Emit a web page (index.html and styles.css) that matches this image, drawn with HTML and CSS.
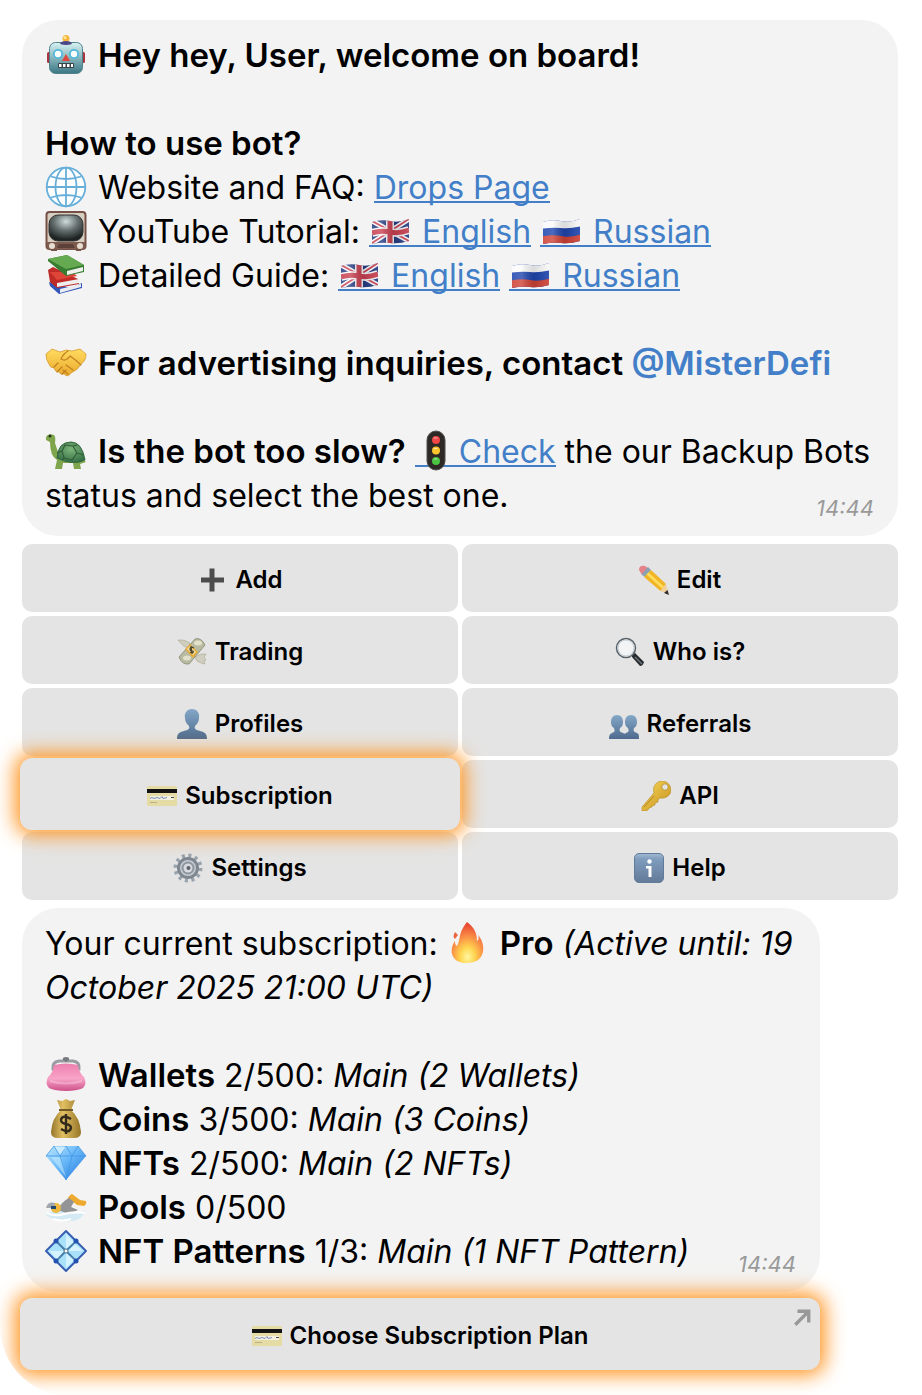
FILE: index.html
```html
<!DOCTYPE html>
<html lang="en">
<head>
<meta charset="utf-8">
<meta name="viewport" content="width=device-width, initial-scale=1">
<title>Bot chat</title>
<link rel="stylesheet" href="styles.css">
</head>
<body>
<svg class="sprite" aria-hidden="true">
  <defs>
    <linearGradient id="g-robot" x1="0" y1="0" x2="0" y2="1"><stop offset="0" stop-color="#d9f3f3"/><stop offset=".5" stop-color="#86b5bb"/><stop offset="1" stop-color="#3b7683"/></linearGradient>
    <radialGradient id="g-tv" cx=".5" cy=".25" r=".7"><stop offset="0" stop-color="#cfdcdb"/><stop offset=".5" stop-color="#65706f"/><stop offset="1" stop-color="#1d2222"/></radialGradient>
    <linearGradient id="g-person" x1="0" y1="0" x2="0" y2="1"><stop offset="0" stop-color="#84a8c8"/><stop offset="1" stop-color="#4e6a8e"/></linearGradient>
    <linearGradient id="g-info" x1="0" y1="0" x2="0" y2="1"><stop offset="0" stop-color="#a3b9d2"/><stop offset=".2" stop-color="#7e9cbd"/><stop offset="1" stop-color="#637a98"/></linearGradient>
    <linearGradient id="g-purse" x1="0" y1="0" x2="0" y2="1"><stop offset="0" stop-color="#ee7fae"/><stop offset=".55" stop-color="#f7a5c7"/><stop offset="1" stop-color="#cf4f8a"/></linearGradient>
    <radialGradient id="g-flame" cx=".5" cy=".85" r=".8"><stop offset="0" stop-color="#fff7a0"/><stop offset=".3" stop-color="#ffd44f"/><stop offset=".65" stop-color="#f98a45"/><stop offset="1" stop-color="#ea4632"/></radialGradient>
    <linearGradient id="g-bag" x1="0" y1="0" x2="1" y2="0"><stop offset="0" stop-color="#93742c"/><stop offset=".4" stop-color="#e2c062"/><stop offset="1" stop-color="#967529"/></linearGradient>
    <linearGradient id="g-gem" x1="0" y1="0" x2="1" y2="1"><stop offset="0" stop-color="#bde8ff"/><stop offset=".5" stop-color="#62b4f7"/><stop offset="1" stop-color="#2171da"/></linearGradient>
    <linearGradient id="g-gold" x1="0" y1="0" x2="1" y2="1"><stop offset="0" stop-color="#f8dc58"/><stop offset="1" stop-color="#c48a1d"/></linearGradient>
    <linearGradient id="g-hand" x1="0" y1="0" x2="0" y2="1"><stop offset="0" stop-color="#ffdb5f"/><stop offset="1" stop-color="#eaaa2d"/></linearGradient>
    <radialGradient id="g-shell" cx=".5" cy=".35" r=".7"><stop offset="0" stop-color="#7eb57b"/><stop offset="1" stop-color="#2f6a41"/></radialGradient>
    <linearGradient id="g-fold" x1="0" y1="0" x2="1" y2="0"><stop offset="0" stop-color="#fff" stop-opacity=".1"/><stop offset=".3" stop-color="#fff" stop-opacity=".2"/><stop offset=".6" stop-color="#000" stop-opacity=".12"/><stop offset="1" stop-color="#fff" stop-opacity=".1"/></linearGradient>
    <clipPath id="wave"><path d="M3 12q9-3 18-1t19-2v22q-10 3-19 2t-18 1z"/></clipPath>
  </defs>

  <symbol id="robot" viewBox="0 0 42 42">
    <rect x="2" y="18" width="4" height="11" rx="1.500" fill="#a8343f"/><rect x="36" y="18" width="4" height="11" rx="1.500" fill="#a8343f"/>
    <circle cx="21" cy="4.500" r="3.500" fill="#f6b73c"/><circle cx="20" cy="3.500" r="1.500" fill="#ffe49a"/>
    <rect x="4.500" y="8.500" width="33" height="31" rx="6" fill="url(#g-robot)" stroke="#4e838c"/>
    <path d="M15 10q1-3 6-3t6 3q-6 2-12 0z" fill="#4b4687"/>
    <circle cx="13" cy="20" r="5" fill="#50b9dc"/><circle cx="29" cy="20" r="5" fill="#50b9dc"/><circle cx="13" cy="20" r="3.200" fill="#fff"/><circle cx="29" cy="20" r="3.200" fill="#fff"/>
    <path d="M21 20l4 7h-8z" fill="#e0473f"/><rect x="13" y="29" width="16" height="5" rx="1" fill="#38444a"/><path d="M14 30h2.500v3H14zm4 0h2.500v3H18zm4 0h2.500v3H22zm4 0h2v3h-2z" fill="#fff"/>
  </symbol>
  <symbol id="globe" viewBox="0 0 42 42">
    <circle cx="21" cy="21" r="19.500" fill="#fff"/>
    <g fill="none" stroke="#67afd9" stroke-width="1.800"><circle cx="21" cy="21" r="19.300"/><ellipse cx="21" cy="21" rx="10.500" ry="19.300"/><path d="M21 2v38M2 21h38M6 10.500q15 5 30 0M6 31.500q15-5 30 0"/></g>
  </symbol>
  <symbol id="tv" viewBox="0 0 42 42">
    <path d="M5 37h7v4H6zm25 0h7l-1 4h-5z" fill="#77564b"/>
    <rect x="1.500" y="2" width="39" height="37" rx="3" fill="#d6cec1" stroke="#765046" stroke-width="2"/>
    <rect x="4" y="5" width="34" height="26" rx="9" fill="url(#g-tv)" stroke="#343232"/>
    <path d="M2 32h38v7H2z" fill="#7e5b4f"/><path d="M14 34h14l2 4H12z" fill="#5c4139"/><circle cx="7" cy="36" r="3" fill="#e6ded1"/><circle cx="35" cy="36" r="3" fill="#e6ded1"/>
  </symbol>
  <symbol id="books" viewBox="0 0 42 42">
    <path d="M4 28l22 6 11-5v5l-23 6-9-8z" fill="#3156b8"/><path d="M15 35l21-5v3l-21 6z" fill="#e9edf2"/>
    <path d="M3 16l5-3 25 12 1 5-22 4-7-6z" fill="#bf2b27"/><path d="M12 29l22-4v4l-22 4z" fill="#eee"/><path d="M5 18l7 8 20-4-5-4z" fill="#de4438"/>
    <path d="M3 5l19-4 17 10v7l-18 4L3 7z" fill="#387c32"/><path d="M3 5l19-4 17 10-18 4z" fill="#65a950"/><path d="M22 17l16-4v4l-16 4z" fill="#eef1ec"/>
  </symbol>
  <symbol id="uk" viewBox="0 0 42 42">
    <g clip-path="url(#wave)"><path fill="#263c83" d="M0 5h42v32H0z"/><path d="M3 11l37 20M3 33L40 9" stroke="#f4f4f7" stroke-width="5"/><path d="M3 11l37 20M3 33L40 9" stroke="#c94050" stroke-width="1.800"/><path d="M21 5v32M3 23q9-3 18-1t19-2" fill="none" stroke="#f4f4f7" stroke-width="8"/><path d="M21 5v32M3 23q9-3 18-1t19-2" fill="none" stroke="#c93f50" stroke-width="5"/><path d="M0 5h42v32H0z" fill="url(#g-fold)"/></g>
  </symbol>
  <symbol id="ru" viewBox="0 0 42 42">
    <g clip-path="url(#wave)"><path fill="#1f45ae" d="M0 5h42v32H0z"/><path d="M0 0h42v16q-12 3-21 2T0 19z" fill="#fafafa"/><path d="M0 27q12-3 21-1t21-2v15H0z" fill="#cf4135"/><path d="M0 5h42v32H0z" fill="url(#g-fold)"/></g>
  </symbol>
  <symbol id="shake" viewBox="0 0 42 42">
    <path d="M1 12l6-5 8 3 6-2 6 1 8-2 6 5q0 7-5 10-3 6-10 9-3 5-7 1-4 1-5-2-4 0-5-4-4 0-5-4-3-4-3-10z" fill="url(#g-hand)" stroke="#d69930" stroke-width=".8"/>
    <path d="M23 9q-5 3-7 8 5 3 9-3 6 4 11 9M9 25l4-4m-1 9l5-5m0 7l4-4m0-5l7 5m-10 0l5 4" fill="none" stroke="#c17e20" stroke-width="1.200" stroke-linecap="round"/>
  </symbol>
  <symbol id="turtle" viewBox="0 0 42 42">
    <path d="M1 7q2-4 8-2 2 2 1 8l4 12 22 3 5 4-6 2 1 5h-7l-1-6H18l-1 6h-7l2-9Q5 26 5 12L1 10z" fill="#7ea54c"/>
    <path d="M12 28q1-16 14-16 11 0 14 18-12 6-28-2z" fill="url(#g-shell)" stroke="#356840"/>
    <path d="M20 15l8 1 4 7-5 7-8-2-2-7zm8 1l4-1m0 8l7 2m-22-4l-5 2m7 5l-2 2" fill="none" stroke="#315e37" stroke-width="1.200"/><circle cx="5" cy="6" r="1.500" fill="#24331a"/>
  </symbol>
  <symbol id="lights" viewBox="0 0 42 42">
    <rect x="12" y="1" width="18" height="39" rx="9" fill="#2c2927" stroke="#524f4c"/><circle cx="21" cy="10" r="4" fill="#ee4746"/><circle cx="21" cy="20.500" r="4" fill="#fbc42e"/><circle cx="21" cy="31" r="4" fill="#4bc442"/><path d="M19 8h3M19 18.500h3M19 29h3" stroke="#fff" opacity=".6" stroke-linecap="round"/>
  </symbol>
  <symbol id="plus" viewBox="0 0 30 30"><path d="M12.500 3.500h5v9H27v5h-9.500v9h-5v-9H4v-5h8.500z" fill="#4c4c4d"/></symbol>
  <symbol id="pencil" viewBox="0 0 30 30">
    <path d="M0 5q0-5 6-4l3 2-6 7z" fill="#e5838a"/><path d="M2.500 9.500L9 2l3 3-6 7z" fill="#8aa0b3"/><path d="M5 12l7-7 15 14-5.500 7z" fill="#f0b425"/><path d="M8.500 8.500L24 22.500" stroke="#ffdc5c" stroke-width="3"/><path d="M27 19l2.500 10-8-3z" fill="#f1cf9c"/><path d="M28.500 25l1.500 5-5-2z" fill="#302b2a"/>
  </symbol>
  <symbol id="money" viewBox="0 0 30 30">
    <path d="M11 11Q6 10 1 3q6-1 12 3zm7 9q6-4 11-3l-2 3 2 3-2 1 1 3-4-1q-5-1-6-6z" fill="#d0cfbf" stroke="#a9a894" stroke-width=".6"/>
    <path d="M2 20L18 2q6-2 10 6L12 27q-7 1-10-7z" fill="#b9baa2" stroke="#85876f" stroke-width=".8"/><ellipse cx="21" cy="6" rx="4" ry="2.500" fill="#e1e0cb"/><ellipse cx="10" cy="21" rx="4" ry="2.500" fill="#e1e0cb"/>
    <path d="M8 12l5-5 8 8-5 6z" fill="#e7ad38"/><path d="M10 12l3-3 6 6-3 3z" fill="#eee0a8"/><path d="M17 11q-4-2-4 1 0 2 3 2 1 3-3 1m1-6l1 8" fill="none" stroke="#4c442b" stroke-width="1.200"/>
  </symbol>
  <symbol id="search" viewBox="0 0 30 30">
    <path d="M17 18l3-2 9 9q-1 4-4 4l-8-9z" fill="#262a2d"/><path d="M20 20l7 7" stroke="#737b82" stroke-width="1.200"/><circle cx="11" cy="11" r="9.500" fill="#f3f4f5" stroke="#596269" stroke-width="1.500"/><circle cx="11" cy="11" r="8" fill="none" stroke="#c5ccd1"/>
  </symbol>
  <symbol id="person" viewBox="0 0 30 30"><path d="M15 0c5 0 8 4 7 9 0 4-2 6-4 8-1 3 1 4 5 5 5 1 7 3 7 8H0c0-5 2-7 7-8 4-1 6-2 5-5-2-2-4-4-4-8-1-5 2-9 7-9z" fill="url(#g-person)"/></symbol>
  <symbol id="people" viewBox="0 0 30 30">
    <path d="M8 6c4 0 6 3 6 7 0 3-1 5-3 6-1 3 0 4 3 5 3 1 4 2 4 6H0c0-4 1-5 3-6 3-1 3-2 2-5-2-1-3-3-3-6 0-4 2-7 6-7z" fill="url(#g-person)"/><path d="M22 6c4 0 6 3 6 7 0 3-1 5-3 6-1 3 0 4 3 5 2 1 2 2 2 6H15c0-4 0-5 2-6 3-1 3-2 2-5-2-1-3-3-3-6 0-4 2-7 6-7z" fill="url(#g-person)"/>
  </symbol>
  <symbol id="card" viewBox="0 0 30 30">
    <rect y="5" width="30" height="20" rx="1.500" fill="#e4dba5"/><path d="M0 8h30v4H0z" fill="#131313"/><path d="M3 15h24v4H3z" fill="#f3f1df"/><path d="M3 17.500l2-1 2 1 3-1 3 1 2-2 1 2 4-1" fill="none" stroke="#7d90bd"/><path d="M24 16.500h3" stroke="#444"/><path d="M3 21.500h7" stroke="#bbb185"/>
  </symbol>
  <symbol id="key" viewBox="0 0 30 30"><path d="M13 12C11 5 16 0 21 0c5 0 9 4 9 9 0 5-5 9-11 8l-2 2v2l-3 1v2l-3 1v1l-3 1-1 2-2 1H1v-4z" fill="url(#g-gold)" stroke="#b8891f" stroke-width=".6"/><circle cx="24" cy="6" r="3.200" fill="#e4e4e4" stroke="#b78a22" stroke-width=".8"/><path d="M13 15L3 26" stroke="#b58425"/></symbol>
  <symbol id="gear" viewBox="0 0 30 30">
    <circle cx="15" cy="15" r="12.500" fill="none" stroke="#98a2ad" stroke-width="4" stroke-dasharray="3 3.545"/><circle cx="15" cy="15" r="9.500" fill="#c7ccd1" stroke="#7e8791" stroke-width="3"/><circle cx="15" cy="15" r="6.500" fill="#8e959e"/><circle cx="15" cy="15" r="4.500" fill="#d7dade"/><circle cx="15.500" cy="15" r="2" fill="#5c6269"/>
  </symbol>
  <symbol id="info" viewBox="0 0 30 30"><rect x=".5" y=".5" width="29" height="29" rx="4.500" fill="url(#g-info)" stroke="#617b9b"/><circle cx="15.500" cy="8.500" r="2.200" fill="#fff"/><path d="M12 13h5.500v11h-3v-8.500H12z" fill="#fff"/></symbol>
  <symbol id="flame" viewBox="0 0 42 42"><path d="M20 0c8 6 10 12 10 19 2-1 2-4 1-6 7 7 10 27-10 28C5 42 1 29 8 19c0 2 0 4 2 5 4-7 1-13 10-24z" fill="url(#g-flame)"/><path d="M8 10l3 3-3 4q-3-2 0-7z" fill="#ef6640"/></symbol>
  <symbol id="purse" viewBox="0 0 42 42">
    <path d="M8 15q-1-7 6-8h14q7 1 6 8z" fill="none" stroke="#999da1" stroke-width="3"/><path d="M18 6q-1-3 3-3t3 3l-3 2z" fill="#777b80"/>
    <path d="M9 11q12-3 24 0 1 8 6 12 5 11-7 13-11 2-22 0Q-2 34 3 23q5-4 6-12z" fill="url(#g-purse)"/><path d="M5 27q16 5 32 0" fill="none" stroke="#ffd4e5" stroke-width="2" opacity=".4"/>
  </symbol>
  <symbol id="bag" viewBox="0 0 42 42">
    <path d="M12 2l5 1 4-2 4 2 5-1-4 10q9 8 10 22 0 6-7 6H13q-7 0-7-6 1-14 10-22z" fill="url(#g-bag)"/><path d="M14 12h14" stroke="#735b28" stroke-width="2"/><path d="M26 21q-9-5-10 1 0 3 5 4 5 1 5 4-2 6-10 1M21 16v20" fill="none" stroke="#332b1b" stroke-width="2.400"/>
  </symbol>
  <symbol id="gem" viewBox="0 0 42 42"><path d="M9 4h24l8 10-20 24L1 14z" fill="url(#g-gem)"/><path d="M1 14h40L33 4 27 14 21 4l-6 10L9 4zm14 0l6 24 6-24" fill="none" stroke="#4397e4" stroke-width=".8"/><path d="M10 5l5 8 6-8z" fill="#dff5ff" opacity=".7"/><path d="M15 15l6 20-15-20z" fill="#c6edff" opacity=".55"/></symbol>
  <symbol id="swim" viewBox="0 0 42 42">
    <path d="M1 29q10-8 20-3t20-2q-5 11-14 11-14 2-26-6z" fill="#d4eaf5"/><path d="M22 14q2-5 5-6l8 6 6 1q1 3-2 5l-7-1-5-4-4 4z" fill="#edaa2e"/><path d="M13 24q3-8 11-12l5 4-3 5 7 3-9 4z" fill="#929496"/><circle cx="11" cy="22" r="5" fill="#efb83f"/><path d="M1 22q2-7 9-5l-1 5z" fill="#a2a7ad"/><path d="M6 20h5v3H6z" fill="#224a74"/><path d="M2 27q8 4 17 1t21-1M8 33q9 3 18 0" fill="none" stroke="#fff" stroke-width="2"/>
  </symbol>
  <symbol id="pattern" viewBox="0 0 42 42">
    <path d="M21 1l20 20-20 20L1 21z" fill="#a9e1fb" stroke="#355cb1" stroke-width="1.800" stroke-linejoin="round"/><path d="M11 11l20 20M31 11L11 31" stroke="#467eaa" stroke-width="2"/><path d="M21 4v15l8-7zM4 21h15l-7 8zm17 2v15l8-8zm2-2h15l-8-7z" fill="#e3f8ff" opacity=".75"/>
    <g fill="#2452b0"><circle cx="11" cy="11" r="2.500"/><circle cx="31" cy="11" r="2.500"/><circle cx="11" cy="31" r="2.500"/><circle cx="31" cy="31" r="2.500"/></g><circle cx="21" cy="21" r="2" fill="#fff" stroke="#52768c"/>
  </symbol>
</svg>

<main class="chat">
  <article class="bubble">
    <p><svg class="emoji"><use href="#robot"/></svg> <strong>Hey hey, User, welcome on board!</strong></p>
    <br>
    <p><strong>How to use bot?</strong></p>
    <p><svg class="emoji"><use href="#globe"/></svg> Website and FAQ: <a href="#faq">Drops Page</a></p>
    <p><svg class="emoji"><use href="#tv"/></svg> YouTube Tutorial: <a href="#video-en"><svg class="emoji"><use href="#uk"/></svg> English</a> <a href="#video-ru"><svg class="emoji"><use href="#ru"/></svg> Russian</a></p>
    <p><svg class="emoji"><use href="#books"/></svg> Detailed Guide: <a href="#guide-en"><svg class="emoji"><use href="#uk"/></svg> English</a> <a href="#guide-ru"><svg class="emoji"><use href="#ru"/></svg> Russian</a></p>
    <br>
    <p><svg class="emoji"><use href="#shake"/></svg> <strong>For advertising inquiries, contact <a class="mention" href="#contact">@MisterDefi</a></strong></p>
    <br>
    <p><svg class="emoji"><use href="#turtle"/></svg> <strong>Is the bot too slow?</strong> <a href="#status"><svg class="emoji"><use href="#lights"/></svg>Check</a> the our Backup Bots status and select the best one.</p>
    <time class="time">14:44</time>
  </article>

  <div class="keyboard">
    <button class="key"><svg class="icon"><use href="#plus"/></svg>Add</button>
    <button class="key"><svg class="icon"><use href="#pencil"/></svg>Edit</button>
    <button class="key"><svg class="icon"><use href="#money"/></svg>Trading</button>
    <button class="key"><svg class="icon"><use href="#search"/></svg>Who is?</button>
    <button class="key"><svg class="icon"><use href="#person"/></svg>Profiles</button>
    <button class="key"><svg class="icon"><use href="#people"/></svg>Referrals</button>
    <button class="key glow"><svg class="icon"><use href="#card"/></svg>Subscription</button>
    <button class="key"><svg class="icon"><use href="#key"/></svg>API</button>
    <button class="key"><svg class="icon"><use href="#gear"/></svg>Settings</button>
    <button class="key"><svg class="icon"><use href="#info"/></svg>Help</button>
  </div>

  <section class="reply">
    <article class="bubble">
      <p>Your current subscription: <svg class="emoji"><use href="#flame"/></svg> <strong>Pro</strong> <em>(Active until: 19 October 2025 21:00 UTC)</em></p>
      <br>
      <p><svg class="emoji"><use href="#purse"/></svg> <strong>Wallets</strong> 2/500: <em>Main (2 Wallets)</em></p>
      <p><svg class="emoji"><use href="#bag"/></svg> <strong>Coins</strong> 3/500: <em>Main (3 Coins)</em></p>
      <p><svg class="emoji"><use href="#gem"/></svg> <strong>NFTs</strong> 2/500: <em>Main (2 NFTs)</em></p>
      <p><svg class="emoji"><use href="#swim"/></svg> <strong>Pools</strong> 0/500</p>
      <p><svg class="emoji"><use href="#pattern"/></svg> <strong>NFT Patterns</strong> 1/3: <em>Main (1 NFT Pattern)</em></p>
      <time class="time">14:44</time>
    </article>
    <button class="key glow plan"><svg class="icon"><use href="#card"/></svg>Choose Subscription Plan
      <svg class="arrow" viewBox="0 0 16 16"><path d="M2 14L13 3M4 2h10v10" fill="none" stroke="#989898" stroke-width="3"/></svg>
    </button>
  </section>
</main>
</body>
</html>
```
FILE: styles.css
```css
* {
  box-sizing: border-box;
}

body {
  margin: 0;
  background: #fff;
  color: #000;
  font-family: Inter, "Liberation Sans", sans-serif;
}

.sprite {
  position: absolute;
  width: 0;
  height: 0;
}

.chat {
  display: flex;
  flex-direction: column;
  gap: 8px;
  padding: 20px 24px 28px 22px;
  overflow: hidden;
  border-bottom-left-radius: 70px;
}

.bubble {
  padding: 14px 12px 18px 23px;
  border-radius: 36px;
  background: #f3f3f3;
  font-size: 32px;
  line-height: 44px;
}

.bubble p {
  margin: 0;
}

.bubble strong {
  font-size: 33px;
  font-weight: 600;
  line-height: 32px;
}

.bubble a {
  color: #427fc8;
  text-decoration: none;
  background: linear-gradient(#427fc8, #427fc8) 0 calc(100% - 4px) / 100% 2px no-repeat;
}

.bubble .mention {
  background: none;
}

.emoji {
  width: 42px;
  height: 42px;
  margin: -4px 2px -4px 0;
  vertical-align: -5px;
}

.time {
  display: block;
  margin: -24px 12px -4px 0;
  text-align: right;
  color: #999;
  font-size: 22px;
  font-style: italic;
  line-height: 28px;
}

.keyboard {
  display: grid;
  grid-template-columns: 1fr 1fr;
  gap: 4px;
}

.key {
  display: flex;
  align-items: center;
  justify-content: center;
  gap: 8px;
  min-height: 68px;
  padding: 6px 16px 3px;
  border: 0;
  border-radius: 10px;
  background: #e4e4e4;
  color: #000;
  font: 600 24px/32px Inter, "Liberation Sans", sans-serif;
  cursor: pointer;
}

.icon {
  flex: none;
  width: 30px;
  height: 30px;
}

.glow {
  position: relative;
  z-index: 1;
  box-shadow: 0 0 0 2px #e4e4e4, 0 0 20px 7px #ff9420;
}

.reply {
  display: flex;
  flex-direction: column;
  gap: 8px;
  width: 100%;
  max-width: 798px;
}

.plan {
  margin-right: 2px;
}

.arrow {
  position: absolute;
  top: 9px;
  right: 7px;
  width: 18px;
  height: 18px;
}
```
